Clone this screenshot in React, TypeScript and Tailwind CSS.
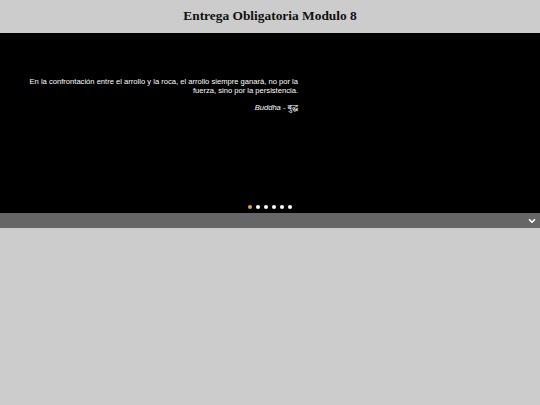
import { ChevronDown } from "lucide-react";

const quote = {
  text: "En la confrontación entre el arrollo y la roca, el arrollo siempre ganará, no por la fuerza, sino por la persistencia.",
  author: "Buddha - बुद्ध",
};

const Dots = ({ count, active }: { count: number; active: number }) => (
  <div className="flex justify-center gap-[4px]">
    {Array.from({ length: count }).map((_, i) => (
      <span
        key={i}
        className={
          i === active
            ? "w-[4px] h-[4px] rounded-full bg-[#e8a23a]"
            : "w-[4px] h-[4px] rounded-full bg-white"
        }
      />
    ))}
  </div>
);

const App = () => {
  return (
    <div className="min-h-[405px] bg-[#cccccc]">
      <header className="h-[33px] flex items-center justify-center">
        <h1 className="text-[13.4px] font-bold text-[#111] font-['Liberation_Serif',serif]">
          Entrega Obligatoria Modulo 8
        </h1>
      </header>

      <section className="h-[180px] bg-black flex flex-col font-['Liberation_Sans','Noto_Sans',sans-serif] text-white">
        <div className="pt-[44px] w-[298px] pl-[24px] text-right">
          <p className="text-[7.6px] leading-[9px]">{quote.text}</p>
          <p className="text-[7.6px] leading-[9px] italic mt-[8px]">{quote.author}</p>
        </div>
        <div className="mt-auto pb-[4px]">
          <Dots count={6} active={0} />
        </div>
      </section>

      <div className="h-[15px] bg-[#666666] flex items-center justify-end pr-[3px]">
        <ChevronDown className="w-[10px] h-[10px] text-white" strokeWidth={4} />
      </div>
    </div>
  );
};

export default App;
